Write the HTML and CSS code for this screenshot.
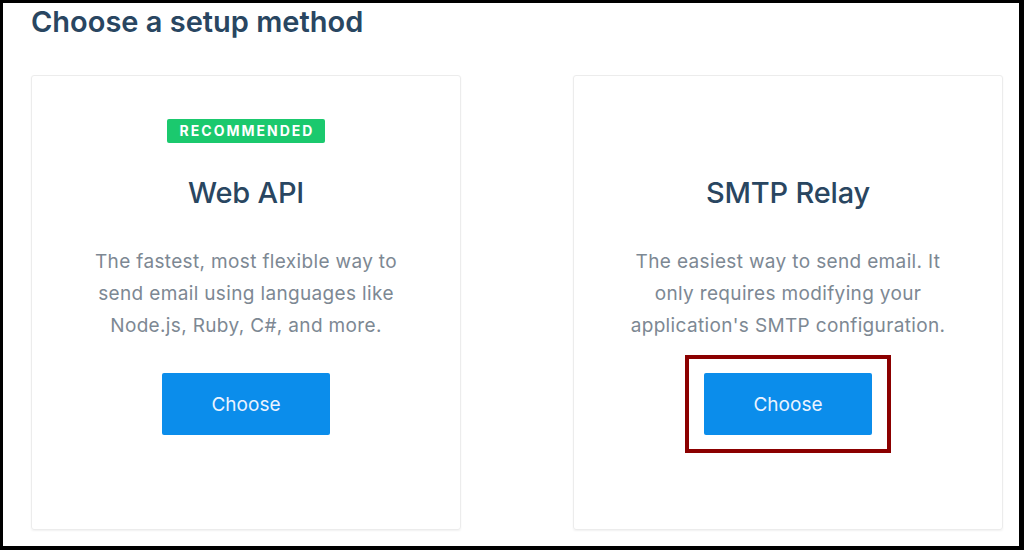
FILE: index.html
```html
<!DOCTYPE html>
<html>
<head>
<meta charset="utf-8">
<link rel="stylesheet" href="styles.css">
</head>
<body>
<div class="frame">
  <h1 class="heading">Choose a setup method</h1>
  <div class="cards">
    <div class="card">
      <span class="badge">RECOMMENDED</span>
      <h2 class="title">Web API</h2>
      <p class="desc">The fastest, most flexible way to<br>send email using languages like<br>Node.js, Ruby, C#, and more.</p>
      <div class="btn-wrap"><button class="btn">Choose</button></div>
    </div>
    <div class="card">
      <span class="badge-space"></span>
      <h2 class="title">SMTP Relay</h2>
      <p class="desc">The easiest way to send email. It<br>only requires modifying your<br>application's SMTP configuration.</p>
      <div class="btn-wrap highlight"><button class="btn">Choose</button></div>
    </div>
  </div>
</div>
</body>
</html>
```
FILE: styles.css
```css
html, body {
  margin: 0;
  padding: 0;
  background: #000;
}
body {
  padding: 3px 5px 4px 3px;
  font-family: Inter, "Noto Sans", sans-serif;
}
.frame {
  background: #fff;
  height: 543px;
  box-sizing: border-box;
  padding: 0 0 0 28px;
  overflow: hidden;
}
.heading {
  margin: 0;
  padding-top: 2px;
  font-size: 29px;
  line-height: 34px;
  font-weight: 600;
  color: #294661;
  letter-spacing: 0;
}
.cards {
  display: flex;
  gap: 112px;
  margin-top: 36px;
}
.card {
  width: 430px;
  height: 455px;
  box-sizing: border-box;
  border: 1px solid #ececec;
  border-radius: 3px;
  box-shadow: 0 1px 2px rgba(0,0,0,0.06);
  display: flex;
  flex-direction: column;
  align-items: center;
  padding-top: 43px;
}
.badge, .badge-space {
  display: block;
  height: 24px;
  width: 158px;
  box-sizing: border-box;
}
.badge {
  background: #1bc96e;
  color: #fff;
  border-radius: 2px;
  font-size: 14px;
  font-weight: 700;
  letter-spacing: 2px;
  line-height: 24px;
  text-align: center;
  padding-left: 2px;
}
.title {
  margin: 33px 0 0;
  font-size: 29px;
  line-height: 34px;
  font-weight: 500;
  color: #294661;
  letter-spacing: -0.2px;
}
.desc {
  margin: 36px 0 0;
  font-size: 19px;
  line-height: 32px;
  font-weight: 400;
  color: #7d8893;
  letter-spacing: 0.35px;
  text-align: center;
}
.btn-wrap {
  margin-top: 13px;
  padding: 14px 15px;
  border: 4px solid transparent;
}
.btn-wrap.highlight {
  border-color: #8b0000;
}
.btn {
  display: block;
  width: 168px;
  height: 62px;
  border: none;
  border-radius: 2px;
  background: #0b8deb;
  color: #eaf3ff;
  font-family: Inter, "Noto Sans", sans-serif;
  font-size: 19px;
  padding: 0;
}
```
